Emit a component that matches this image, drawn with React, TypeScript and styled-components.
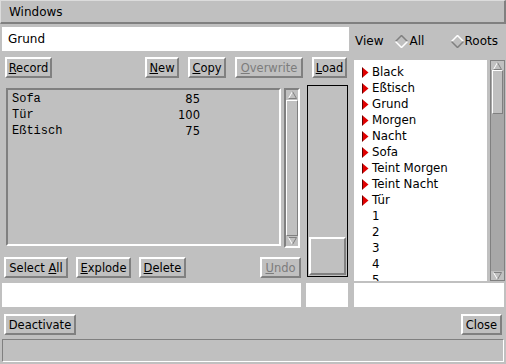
import React from "react";
import styled, { createGlobalStyle } from "styled-components";

const GlobalStyle = createGlobalStyle`
  html, body {
    margin: 0;
    padding: 0;
    background: #c0c0c0;
  }
  * {
    box-sizing: border-box;
  }
`;

const ui = {
  bg: "#c0c0c0",
  light: "#ffffff",
  shadow: "#808080",
  trough: "#a8a8a8",
  sans: "'DejaVu Sans', Verdana, sans-serif",
  mono: "'Liberation Mono', 'Courier New', monospace",
};

type Entry = { name: string; value: number };

const entries: Entry[] = [
  { name: "Sofa", value: 85 },
  { name: "Tür", value: 100 },
  { name: "Eßtisch", value: 75 },
];

const tree: { label: string; branch: boolean }[] = [
  { label: "Black", branch: true },
  { label: "Eßtisch", branch: true },
  { label: "Grund", branch: true },
  { label: "Morgen", branch: true },
  { label: "Nacht", branch: true },
  { label: "Sofa", branch: true },
  { label: "Teint Morgen", branch: true },
  { label: "Teint Nacht", branch: true },
  { label: "Tür", branch: true },
  { label: "1", branch: false },
  { label: "2", branch: false },
  { label: "3", branch: false },
  { label: "4", branch: false },
  { label: "5", branch: false },
];

const Mnemonic: React.FC<{ text: string; at?: number }> = ({ text, at }) => {
  if (at === undefined) return <>{text}</>;
  return (
    <>
      {text.slice(0, at)}
      <u>{text[at]}</u>
      {text.slice(at + 1)}
    </>
  );
};

const Triangle = () => (
  <svg width="7" height="11" viewBox="0 0 7 11">
    <polygon points="0.5,0.5 6.5,5.5 0.5,10.5" fill="#e00000" />
    <line x1="0.5" y1="0.5" x2="0.5" y2="10.5" stroke="#600000" />
  </svg>
);

const Diamond: React.FC<{ on?: boolean }> = ({ on }) => (
  <svg width="13" height="13" viewBox="0 0 13 13">
    <polygon points="6.5,0.5 12.5,6.5 6.5,12.5 0.5,6.5" fill={ui.bg} />
    <polyline points="0.5,6.5 6.5,0.5 12.5,6.5" fill="none" stroke={on ? ui.shadow : ui.light} strokeWidth="1.5" />
    <polyline points="0.5,6.5 6.5,12.5 12.5,6.5" fill="none" stroke={on ? ui.light : ui.shadow} strokeWidth="1.5" />
  </svg>
);

const Arrow: React.FC<{ down?: boolean; size?: number }> = ({ down, size = 9 }) => (
  <svg width={size} height={size - 1} viewBox="0 0 9 8">
    {down ? (
      <>
        <polygon points="0.5,0.5 8.5,0.5 4.5,7.5" fill={ui.bg} />
        <polyline points="0.5,0.5 8.5,0.5" stroke={ui.shadow} fill="none" />
        <polyline points="0.5,0.5 4.5,7.5" stroke={ui.light} fill="none" />
        <polyline points="8.5,0.5 4.5,7.5" stroke={ui.shadow} fill="none" />
      </>
    ) : (
      <>
        <polygon points="4.5,0.5 8.5,7.5 0.5,7.5" fill={ui.bg} />
        <polyline points="4.5,0.5 0.5,7.5" stroke={ui.light} fill="none" />
        <polyline points="4.5,0.5 8.5,7.5 0.5,7.5" stroke={ui.shadow} fill="none" />
      </>
    )}
  </svg>
);

export default function App() {
  return (
    <>
      <GlobalStyle />
      <Window>
        <TitleBar>Windows</TitleBar>
        <Main>
          <NameField>Grund</NameField>
          <ViewRow>
            <ViewLabel>View</ViewLabel>
            <RadioOption>
              <Diamond on />
              All
            </RadioOption>
            <RadioOption $push>
              <Diamond />
              Roots
            </RadioOption>
          </ViewRow>

          <Tools>
            <Button $w={47}>
              <Mnemonic text="Record" at={0} />
            </Button>
            <ToolGroup>
              <Button $w={34}>
                <Mnemonic text="New" at={0} />
              </Button>
              <Button $w={38}>
                <Mnemonic text="Copy" at={0} />
              </Button>
              <Button $w={68} disabled>
                <Mnemonic text="Overwrite" at={0} />
              </Button>
              <Button $w={35}>
                <Mnemonic text="Load" at={0} />
              </Button>
            </ToolGroup>
          </Tools>

          <ListArea>
            <ListPanel>
              {entries.map((e) => (
                <ListRow key={e.name}>
                  <EntryName>{e.name}</EntryName>
                  <EntryValue>{e.value}</EntryValue>
                </ListRow>
              ))}
            </ListPanel>
            <ListScroll>
              <ArrowBox>
                <Arrow />
              </ArrowBox>
              <ListThumb />
              <ArrowBox>
                <Arrow down />
              </ArrowBox>
            </ListScroll>
          </ListArea>

          <SliderArea>
            <SliderBox>
              <SliderThumb />
            </SliderBox>
          </SliderArea>

          <Actions>
            <Button $w={64}>
              <Mnemonic text="Select All" at={7} />
            </Button>
            <Button $w={55}>
              <Mnemonic text="Explode" at={0} />
            </Button>
            <Button $w={47}>
              <Mnemonic text="Delete" at={0} />
            </Button>
            <Button $w={41} $push disabled>
              <Mnemonic text="Undo" at={0} />
            </Button>
          </Actions>

          <TreeArea>
            <TreeList>
              {tree.map((t) => (
                <TreeRow key={t.label}>
                  {t.branch ? <Triangle /> : <Spacer />}
                  {t.label}
                </TreeRow>
              ))}
            </TreeList>
            <TreeScroll>
              <TreeArrow>
                <Arrow size={9} />
              </TreeArrow>
              <TreeThumb />
              <TreeTrough />
              <TreeArrow>
                <Arrow down size={9} />
              </TreeArrow>
            </TreeScroll>
          </TreeArea>

          <Field $area="f1" />
          <Field $area="f2" />
          <Field $area="f3" />
        </Main>

        <Footer>
          <Button $w={72}>Deactivate</Button>
          <Button $w={41}>Close</Button>
        </Footer>
        <StatusBar />
      </Window>
    </>
  );
}

const Window = styled.div`
  width: 506px;
  height: 364px;
  background: ${ui.bg};
  font-family: ${ui.sans};
  color: #000;
  display: flex;
  flex-direction: column;
  overflow: hidden;
`;

const TitleBar = styled.div`
  height: 24px;
  padding-left: 8px;
  display: flex;
  align-items: center;
  font-size: 12px;
  border-top: 1px solid #dcdcdc;
  border-left: 1px solid #dcdcdc;
  border-bottom: 2px solid ${ui.shadow};
  border-right: 2px solid ${ui.shadow};
`;

const Main = styled.div`
  display: grid;
  grid-template-columns: 303px 48px 155px;
  grid-template-rows: 30px 28px 169px 30px 28px;
  grid-template-areas:
    "name name view"
    "tools tools tree"
    "list slider tree"
    "actions slider tree"
    "f1 f2 f3";
`;

const NameField = styled.div`
  grid-area: name;
  margin: 3px 2px;
  background: #fff;
  padding-left: 6px;
  font-size: 12px;
  line-height: 24px;
`;

const ViewRow = styled.div`
  grid-area: view;
  display: flex;
  align-items: center;
  padding: 4px 8px 0 4px;
  font-size: 12px;
`;

const ViewLabel = styled.span`
  margin-right: 12px;
`;

const RadioOption = styled.span<{ $push?: boolean }>`
  display: flex;
  align-items: center;
  gap: 1px;
  margin-left: ${(p) => (p.$push ? "auto" : "0")};
`;

const Button = styled.button<{ $w: number; $push?: boolean }>`
  width: ${(p) => p.$w}px;
  height: 21px;
  padding: 0;
  margin-left: ${(p) => (p.$push ? "auto" : "0")};
  background: ${ui.bg};
  font-family: ${ui.sans};
  font-size: 11.5px;
  color: #000;
  border: 2px solid;
  border-color: ${ui.light} ${ui.shadow} ${ui.shadow} ${ui.light};
  white-space: nowrap;
  overflow: hidden;

  &:disabled {
    color: #7c7c7c;
  }
`;

const Tools = styled.div`
  grid-area: tools;
  display: flex;
  align-items: flex-start;
  padding: 3px 4px 0 5px;
`;

const ToolGroup = styled.div`
  display: flex;
  gap: 9px;
  margin-left: auto;
`;

const ListArea = styled.div`
  grid-area: list;
  display: flex;
  align-items: flex-start;
  gap: 3px;
  padding: 6px 3px 0 6px;
`;

const ListPanel = styled.div`
  flex: 1;
  height: 158px;
  border: 2px solid;
  border-color: ${ui.shadow} ${ui.light} ${ui.light} ${ui.shadow};
  padding: 1px 0 0 4px;
`;

const ListRow = styled.div`
  display: flex;
  height: 16px;
  align-items: center;
`;

const EntryName = styled.span`
  width: 140px;
  font-family: ${ui.mono};
  font-size: 12px;
`;

const EntryValue = styled.span`
  width: 48px;
  text-align: right;
  font-family: ${ui.sans};
  font-size: 11.5px;
`;

const ListScroll = styled.div`
  width: 16px;
  height: 160px;
  display: flex;
  flex-direction: column;
  border: 2px solid;
  border-color: ${ui.shadow} ${ui.light} ${ui.light} ${ui.shadow};
`;

const ArrowBox = styled.div`
  height: 10px;
  display: flex;
  align-items: center;
  justify-content: center;
`;

const ListThumb = styled.div`
  flex: 1;
  border: 1px solid;
  border-color: ${ui.light} ${ui.shadow} ${ui.shadow} ${ui.light};
`;

const SliderArea = styled.div`
  grid-area: slider;
  padding: 3px 3px 4px 4px;
  display: flex;
`;

const SliderBox = styled.div`
  flex: 1;
  border: 1px solid #000;
  display: flex;
  flex-direction: column;
  justify-content: flex-end;
  padding: 0 1px 1px 1px;
`;

const SliderThumb = styled.div`
  height: 38px;
  border: 2px solid;
  border-color: ${ui.light} ${ui.shadow} ${ui.shadow} ${ui.light};
`;

const Actions = styled.div`
  grid-area: actions;
  display: flex;
  align-items: flex-start;
  gap: 8px;
  padding: 6px 2px 0 4px;
`;

const TreeArea = styled.div`
  grid-area: tree;
  display: flex;
  gap: 3px;
  padding: 6px 1px 0 3px;
`;

const TreeList = styled.div`
  width: 133px;
  background: #fff;
  padding: 4px 0 0 8px;
  overflow: hidden;
  font-size: 11.8px;
`;

const TreeRow = styled.div`
  height: 16px;
  display: flex;
  align-items: center;
  gap: 3px;
  white-space: nowrap;
`;

const Spacer = styled.span`
  width: 7px;
`;

const TreeScroll = styled.div`
  width: 15px;
  display: flex;
  flex-direction: column;
  border: 1px solid ${ui.shadow};
  background: ${ui.trough};
`;

const TreeArrow = styled.div`
  height: 9px;
  display: flex;
  align-items: center;
  justify-content: center;
  background: ${ui.bg};
`;

const TreeThumb = styled.div`
  height: 44px;
  background: ${ui.bg};
  border: 1px solid;
  border-color: ${ui.light} ${ui.shadow} ${ui.shadow} ${ui.light};
  margin: 0 1px;
`;

const TreeTrough = styled.div`
  flex: 1;
`;

const Field = styled.div<{ $area: string }>`
  grid-area: ${(p) => p.$area};
  background: #fff;
  margin: ${(p) => (p.$area === "f1" ? "2px" : p.$area === "f2" ? "2px 3px" : "2px 2px 2px 3px")};
`;

const Footer = styled.div`
  height: 28px;
  display: flex;
  justify-content: space-between;
  align-items: flex-start;
  padding: 5px 4px 0 4px;
`;

const StatusBar = styled.div`
  height: 23px;
  margin: 2px 2px 0 2px;
  border: 1px solid;
  border-color: ${ui.shadow} ${ui.light} ${ui.light} ${ui.shadow};
`;
